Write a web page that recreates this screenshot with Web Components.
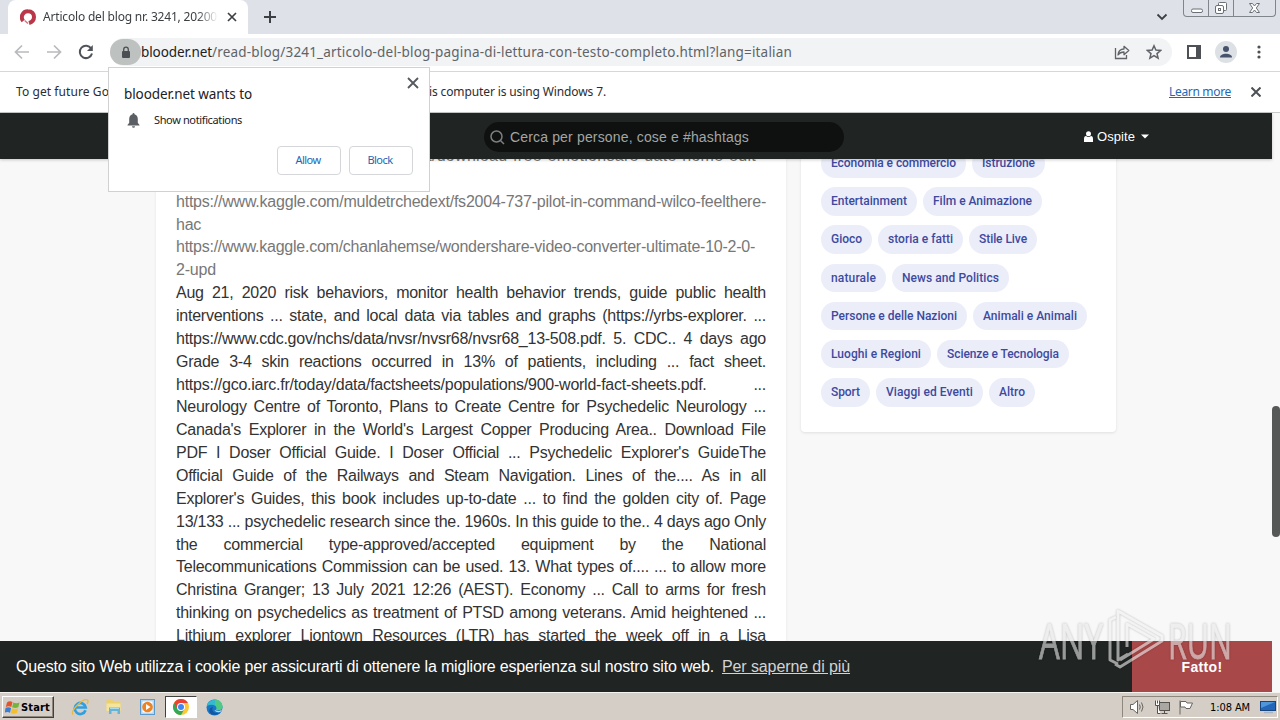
<!DOCTYPE html>
<html lang="it">
<head>
<meta charset="utf-8">
<title>blooder.net</title>
<style>
    html, body { margin: 0; height: 100%; overflow: hidden; }
    body { font-family: "Liberation Sans", Arial, sans-serif; background: #fff; }
</style>
</head>
<body>
<desktop-screen></desktop-screen>
<script>
// Single line of text spaced out to a fixed width
class FitText extends HTMLElement {
    constructor() {
        super();
        this.attachShadow({ mode: 'open' });
        this.shadowRoot.innerHTML = '<style>:host { display: block; flex: none; } span { display: inline-block; white-space: pre; text-decoration: inherit; }</style><span><slot></slot></span>';
    }

    connectedCallback() {
        const width = Number(this.getAttribute('w'));
        const span = this.shadowRoot.querySelector('span');
        const natural = span.getBoundingClientRect().width;
        if (width && natural) {
            span.style.letterSpacing = `${(width - natural) / this.textContent.length}px`;
        }
        this.style.width = `${width}px`;
    }
}

class BrowserTabs extends HTMLElement {
    constructor() {
        super();
        this.attachShadow({ mode: 'open' });
    }

    connectedCallback() {
        this.shadowRoot.innerHTML = `
            <style>
                :host {
                    display: flex;
                    height: 34px;
                    background: #dee1e8;
                    font: 12px "Noto Sans", sans-serif;
                    color: #3c4043;
                }
                .tab {
                    display: flex;
                    align-items: center;
                    box-sizing: border-box;
                    width: 240px;
                    margin-left: 8px;
                    padding: 0 10px 0 12px;
                    background: #fff;
                    border-radius: 8px 8px 0 0;
                }
                .title {
                    width: 175px;
                    margin: -2px 9px 0 7px;
                    -webkit-mask-image: linear-gradient(to right, #000 88%, transparent);
                }
                .plus { margin: 10px 0 0 15px; }
                .chevron { margin: 12px 15px 0 auto; }
                .controls {
                    display: flex;
                    box-sizing: border-box;
                    width: 93px;
                    height: 17px;
                    margin-right: 4px;
                    border: 1px solid #80858c;
                    border-top: 0;
                    border-radius: 0 0 4px 4px;
                }
                .controls svg { display: block; }
            </style>
            <div class="tab">
                <svg width="16" height="16" viewBox="0 0 16 16" fill="none">
                    <path d="M3.200 12A6 6 0 0 1 8 2.200C12 2.200 14 5 14 8Q14 12.500 9 14" stroke="#b93749" stroke-width="4"/>
                    <path d="M4.600 11.500l3.400 3" stroke="#d86a78" stroke-width="1.300"/>
                </svg>
                <div class="title"><fit-text w="174">Articolo del blog nr. 3241, 20200</fit-text></div>
                <svg width="10" height="10" viewBox="0 0 10 10" stroke="#3c4043" stroke-width="1.7"><path d="M1 1l8 8M9 1l-8 8"/></svg>
            </div>
            <svg class="plus" width="14" height="14" viewBox="0 0 14 14" stroke="#3c4043" stroke-width="2"><path d="M7 1v12M1 7h12"/></svg>
            <svg class="chevron" width="12" height="10" viewBox="0 0 12 10" fill="none" stroke="#3c4043" stroke-width="1.8"><path d="M1.5 2.5L6 7l4.500-4.500"/></svg>
            <div class="controls">
                <svg width="91" height="16" viewBox="0 0 91 16" fill="none" stroke="#6b7077">
                    <path d="M24.500 0v16M49.500 0v16" stroke="#80858c"/>
                    <rect x="7.500" y="9" width="11" height="3.500" rx="1.500" fill="#fff"/>
                    <path d="M34.500 5V3.500q0-1 1-1h6q1 0 1 1v6q0 1-1 1H40" fill="#fff"/>
                    <rect x="31.500" y="5.500" width="8" height="8" rx="1.500" fill="#fff"/>
                    <rect x="34.500" y="8.500" width="2" height="2"/>
                    <path d="M65.500 3.500h3l2 2.500 2-2.500h3L72.300 8l3.200 4.500h-3l-2-2.500-2 2.500h-3L68.700 8z" fill="#fff"/>
                </svg>
            </div>
        `;
    }
}

class BrowserToolbar extends HTMLElement {
    constructor() {
        super();
        this.attachShadow({ mode: 'open' });
    }

    connectedCallback() {
        this.shadowRoot.innerHTML = `
            <style>
                :host {
                    display: flex;
                    align-items: center;
                    box-sizing: border-box;
                    height: 38px;
                    padding: 0 13px 1px 14px;
                    background: #fff;
                    border-bottom: 1px solid #d5d7da;
                    font: 13.5px "Noto Sans", sans-serif;
                    color: #5f6368;
                }
                svg { display: block; flex: none; }
                .nav { display: flex; gap: 16px; }
                .address {
                    display: flex;
                    align-items: center;
                    box-sizing: border-box;
                    width: 1062px;
                    height: 28px;
                    margin-left: 16px;
                    padding-right: 10px;
                    background: #f1f3f4;
                    border-radius: 14px;
                }
                .lock {
                    display: grid;
                    place-items: center;
                    width: 31px;
                    height: 26px;
                    border-radius: 13px;
                    background: #bdc1c0;
                }
                .host { color: #202124; }
                .share { margin: 0 16px 0 auto; }
                .panel { margin-left: 15px; }
                .avatar { margin-left: 14px; }
                .menu { margin-left: auto; }
            </style>
            <div class="nav">
                <svg width="16" height="16" viewBox="0 0 16 16" fill="none" stroke="#b8babd" stroke-width="1.7"><path d="M15 8H2M8 1.500L1.500 8 8 14.500"/></svg>
                <svg width="16" height="16" viewBox="0 0 16 16" fill="none" stroke="#b8babd" stroke-width="1.7"><path d="M1 8h13M8 1.500L14.500 8 8 14.500"/></svg>
                <svg width="16" height="16" viewBox="0 0 16 16" fill="none" stroke="#505459" stroke-width="2"><path d="M13.200 4.500A6.200 6.200 0 1 0 14 9.500"/><path d="M14.800 1v6H9z" fill="#505459" stroke="none"/></svg>
            </div>
            <div class="address">
                <div class="lock">
                    <svg width="10" height="13" viewBox="0 0 10 13"><rect x="1" y="5" width="8" height="7" rx="1" fill="#4b4f53"/><path d="M2.700 5V3.500a2.300 2.300 0 0 1 4.600 0V5" fill="none" stroke="#4b4f53" stroke-width="1.300"/></svg>
                </div>
                <fit-text class="host" w="71">blooder.net</fit-text>
                <fit-text w="580">/read-blog/3241_articolo-del-blog-pagina-di-lettura-con-testo-completo.html?lang=italian</fit-text>
                <svg class="share" width="16" height="16" viewBox="0 0 16 16" fill="none" stroke="#5f6368" stroke-width="1.300"><path d="M1.500 4v10.500h11V11"/><path d="M4 11c.4-4 2.300-6 6-6V2.300L14.800 6.600 10 10.700V8C7.500 8 5.500 8.800 4 11z" stroke-linejoin="round"/></svg>
                <svg width="16" height="16" viewBox="0 0 16 16" fill="none" stroke="#5f6368" stroke-width="1.500"><path d="M8 1.800l1.900 4.300 4.700.4-3.600 3.100 1.100 4.600L8 11.700l-4.100 2.500L5 9.600 1.400 6.500l4.700-.4z"/></svg>
            </div>
            <svg class="panel" width="14" height="14" viewBox="0 0 14 14"><rect x="1" y="1" width="12" height="12" fill="#fff" stroke="#4d5156" stroke-width="2"/><path d="M9 1h4v12H9z" fill="#4d5156"/></svg>
            <svg class="avatar" width="22" height="22" viewBox="0 0 22 22"><circle cx="11" cy="11" r="11" fill="#dde1e6"/><circle cx="11" cy="8" r="3" fill="#46516c"/><path d="M5 16.500c0-5 12-5 12 0z" fill="#46516c"/></svg>
            <svg class="menu" width="16" height="16" viewBox="0 0 16 16" fill="#4d5156"><circle cx="8" cy="3" r="1.600"/><circle cx="8" cy="8" r="1.600"/><circle cx="8" cy="13" r="1.600"/></svg>
        `;
    }
}

class InfoBar extends HTMLElement {
    constructor() {
        super();
        this.attachShadow({ mode: 'open' });
    }

    connectedCallback() {
        this.shadowRoot.innerHTML = `
            <style>
                :host {
                    display: flex;
                    align-items: center;
                    box-sizing: border-box;
                    height: 41px;
                    padding: 0 19px 1px 16px;
                    background: #fff;
                    border-bottom: 1px solid #c8cac9;
                    font: 12px "Noto Sans", sans-serif;
                    color: #2b2d30;
                }
                .message { display: flex; }
                .learn { margin: 0 20px 0 auto; color: #1c6ab5; text-decoration: underline; }
            </style>
            <div class="message">
                <fit-text w="93">To get future Go</fit-text>
                <fit-text w="320">ogle Chrome updates, you'll need Windows 10 or later. Th</fit-text>
                <fit-text w="177">is computer is using Windows 7.</fit-text>
            </div>
            <fit-text class="learn" w="62">Learn more</fit-text>
            <svg width="10" height="10" viewBox="0 0 10 10" stroke="#4d5156" stroke-width="2"><path d="M.5.5l9 9M9.500.5l-9 9"/></svg>
        `;
    }
}

class PermissionBubble extends HTMLElement {
    constructor() {
        super();
        this.attachShadow({ mode: 'open' });
    }

    connectedCallback() {
        this.shadowRoot.innerHTML = `
            <style>
                :host {
                    display: flex;
                    flex-direction: column;
                    box-sizing: border-box;
                    width: 322px;
                    height: 125px;
                    padding: 9px 16px 16px 15px;
                    background: #fff;
                    border: 1px solid #cfd1d2;
                    font: 11px "Noto Sans", sans-serif;
                    color: #202124;
                }
                .head { display: flex; justify-content: space-between; height: 31px; }
                .head fit-text { margin-top: 7px; font-size: 13.5px; line-height: 20px; }
                .head svg { margin-right: -6px; }
                .row { display: flex; align-items: center; height: 24px; padding-left: 3px; gap: 14px; }
                .row fit-text { margin-top: -2px; }
                .buttons { display: flex; justify-content: flex-end; gap: 8px; margin-top: auto; }
                button {
                    display: grid;
                    place-items: center;
                    width: 64px;
                    height: 29px;
                    padding: 0 2px 2px 0;
                    background: #fff;
                    border: 1px solid #d4d6d9;
                    border-radius: 4px;
                    font: inherit;
                    color: #1b66b8;
                }
            </style>
            <div class="head">
                <fit-text w="128">blooder.net wants to</fit-text>
                <svg width="12" height="12" viewBox="0 0 12 12" stroke="#55595e" stroke-width="1.800"><path d="M1 1l10 10M11 1L1 11"/></svg>
            </div>
            <div class="row">
                <svg width="13" height="15" viewBox="0 0 13 15" fill="#5b5f64"><path d="M6.500 0q1 0 1 1.300C9.800 2 10.800 3.800 10.800 6v3.800L12.500 12v.6H.5V12l1.700-2.200V6c0-2.200 1-4 3.300-4.700Q5.500 0 6.500 0zM5 13.300h3a1.500 1.500 0 0 1-3 0z"/></svg>
                <fit-text w="88">Show notifications</fit-text>
            </div>
            <div class="buttons">
                <button><fit-text w="25">Allow</fit-text></button>
                <button><fit-text w="25">Block</fit-text></button>
            </div>
        `;
    }
}

class SiteHeader extends HTMLElement {
    constructor() {
        super();
        this.attachShadow({ mode: 'open' });
    }

    connectedCallback() {
        this.shadowRoot.innerHTML = `
            <style>
                :host {
                    display: grid;
                    grid-template-columns: 484px 360px auto;
                    align-items: center;
                    height: 46px;
                    background: #202423;
                    box-shadow: 0 1px 3px rgba(0, 0, 0, .2);
                    color: #fff;
                }
                .search {
                    grid-column: 2;
                    display: flex;
                    align-items: center;
                    box-sizing: border-box;
                    height: 30px;
                    margin-top: 2px;
                    padding-left: 6px;
                    gap: 5px;
                    background: #0e1110;
                    border-radius: 15px;
                    color: #a3a5a4;
                    font-size: 14px;
                }
                .user {
                    display: flex;
                    align-items: center;
                    margin-left: 240px;
                    font-size: 13px;
                }
                .user fit-text { margin: 0 6px 0 4px; }
            </style>
            <div class="search">
                <svg width="15" height="15" viewBox="0 0 15 15" fill="none" stroke="#7c7f7e" stroke-width="1.500"><circle cx="6.500" cy="6.500" r="5.500"/><path d="M10.500 10.500L14 14"/></svg>
                <fit-text w="239">Cerca per persone, cose e #hashtags</fit-text>
            </div>
            <div class="user">
                <svg width="9" height="11" viewBox="0 0 9 11" fill="#fff"><circle cx="4.500" cy="2.800" r="2.500"/><path d="M0 11V8q0-3 2-3 2.500 1.800 5 0 2 0 2 3v3z"/></svg>
                <fit-text w="38">Ospite</fit-text>
                <svg width="8" height="5" viewBox="0 0 8 5" fill="#fff"><path d="M0 .5h8L4 4.500z"/></svg>
            </div>
        `;
    }
}

class BlogArticle extends HTMLElement {
    constructor() {
        super();
        this.attachShadow({ mode: 'open' });
        this.links = [
            ['https://www.kaggle.com/sandrinest/download-free-emotionsare-date-nome-edit', 580],
            ['hac', 25],
            ['https://www.kaggle.com/muldetrchedext/fs2004-737-pilot-in-command-wilco-feelthere-', 590],
            ['hac', 25],
            ['https://www.kaggle.com/chanlahemse/wondershare-video-converter-ultimate-10-2-0-', 579],
            ['2-upd', 40]
        ];
        this.lines = [
            'Aug 21, 2020 risk behaviors, monitor health behavior trends, guide public health',
            'interventions ... state, and local data via tables and graphs (https://yrbs-explorer. ...',
            'https://www.cdc.gov/nchs/data/nvsr/nvsr68/nvsr68_13-508.pdf. 5. CDC.. 4 days ago',
            'Grade 3-4 skin reactions occurred in 13% of patients, including ... fact sheet.',
            'https://gco.iarc.fr/today/data/factsheets/populations/900-world-fact-sheets.pdf. ...',
            'Neurology Centre of Toronto, Plans to Create Centre for Psychedelic Neurology ...',
            "Canada's Explorer in the World's Largest Copper Producing Area.. Download File",
            "PDF I Doser Official Guide. I Doser Official ... Psychedelic Explorer's GuideThe",
            'Official Guide of the Railways and Steam Navigation. Lines of the.... As in all',
            "Explorer's Guides, this book includes up-to-date ... to find the golden city of. Page",
            '13/133 ... psychedelic research since the. 1960s. In this guide to the.. 4 days ago Only',
            'the commercial type-approved/accepted equipment by the National',
            'Telecommunications Commission can be used. 13. What types of.... ... to allow more',
            'Christina Granger; 13 July 2021 12:26 (AEST). Economy ... Call to arms for fresh',
            'thinking on psychedelics as treatment of PTSD among veterans. Amid heightened ...',
            'Lithium explorer Liontown Resources (LTR) has started the week off in a Lisa'
        ];
    }

    connectedCallback() {
        this.shadowRoot.innerHTML = `
            <style>
                :host {
                    display: block;
                    flex: none;
                    box-sizing: border-box;
                    width: 630px;
                    height: 520px;
                    padding: 0 20px;
                    background: #fff;
                    box-shadow: 0 0 3px rgba(0, 0, 0, .08);
                    font-size: 16px;
                    line-height: 22.86px;
                    color: #333;
                }
                .text { display: flex; flex-direction: column; margin-top: -14px; }
                .link { height: 22.86px; color: #777; }
                p {
                    flex: none;
                    margin: 0;
                    white-space: nowrap;
                    letter-spacing: -.25px;
                    text-align: justify;
                    text-align-last: justify;
                }
            </style>
            <div class="text">
                ${this.links.map(([text, w]) => `<fit-text class="link" w="${w}">${text}</fit-text>`).join('')}
                ${this.lines.map(text => `<p>${text}</p>`).join('')}
            </div>
        `;
    }
}

class CategoryCard extends HTMLElement {
    constructor() {
        super();
        this.attachShadow({ mode: 'open' });
        this.rows = [
            [['Economia e commercio', 125], ['Istruzione', 53]],
            [['Entertainment', 76], ['Film e Animazione', 99]],
            [['Gioco', 31], ['storia e fatti', 65], ['Stile Live', 48]],
            [['naturale', 45], ['News and Politics', 97]],
            [['Persone e delle Nazioni', 126], ['Animali e Animali', 94]],
            [['Luoghi e Regioni', 90], ['Scienze e Tecnologia', 112]],
            [['Sport', 29], ['Viaggi ed Eventi', 87], ['Altro', 26]]
        ];
    }

    connectedCallback() {
        this.shadowRoot.innerHTML = `
            <style>
                :host {
                    display: flex;
                    flex-direction: column;
                    gap: 9.7px;
                    box-sizing: border-box;
                    width: 315px;
                    height: 283px;
                    margin-top: -10px;
                    padding: 0 20px;
                    background: #fff;
                    border-radius: 0 0 4px 4px;
                    box-shadow: 0 1px 3px rgba(0, 0, 0, .1);
                    font: 500 12px/16px Roboto, sans-serif;
                    color: #3d4a9f;
                }
                .row { display: flex; gap: 6px; }
                .tag {
                    box-sizing: border-box;
                    height: 28.5px;
                    padding: 6px 10px;
                    border-radius: 15px;
                    background: #ebedf9;
                }
            </style>
            ${this.rows.map(row => `
                <div class="row">
                    ${row.map(([name, w]) => `<div class="tag"><fit-text w="${w}">${name}</fit-text></div>`).join('')}
                </div>
            `).join('')}
        `;
    }
}

class CookieBar extends HTMLElement {
    constructor() {
        super();
        this.attachShadow({ mode: 'open' });
    }

    connectedCallback() {
        this.shadowRoot.innerHTML = `
            <style>
                :host {
                    display: flex;
                    align-items: center;
                    height: 51px;
                    padding-left: 16px;
                    background: #202423;
                    color: #fff;
                    font-size: 16px;
                }
                .more { margin-left: 8px; color: #d2d3d3; text-decoration: underline; }
                .done {
                    display: grid;
                    place-items: center;
                    width: 140px;
                    height: 51px;
                    margin-left: auto;
                    background: #a94848;
                    font-size: 14px;
                    font-weight: 700;
                }
            </style>
            <fit-text w="698">Questo sito Web utilizza i cookie per assicurarti di ottenere la migliore esperienza sul nostro sito web.</fit-text>
            <fit-text class="more" w="128">Per saperne di più</fit-text>
            <div class="done"><fit-text w="41">Fatto!</fit-text></div>
        `;
    }
}

class SandboxMark extends HTMLElement {
    constructor() {
        super();
        this.attachShadow({ mode: 'open' });
    }

    connectedCallback() {
        this.shadowRoot.innerHTML = `
            <style>
                :host { display: block; opacity: .6; filter: drop-shadow(0 0 1px rgba(0, 0, 0, .4)); }
                svg { display: block; }
                text { font: 50px "Open Sans", sans-serif; fill: #e8e8e8; stroke: #e8e8e8; stroke-width: .8px; }
            </style>
            <svg width="200" height="66" viewBox="0 0 200 66">
                <text x="3" y="52" textLength="64" lengthAdjust="spacingAndGlyphs">ANY</text>
                <text x="132" y="52" textLength="64" lengthAdjust="spacingAndGlyphs">RUN</text>
                <g fill="none" stroke="#f0f0f0" stroke-width="3" stroke-linejoin="round">
                    <path d="M80 10L74 13v40l8 4"/>
                    <path d="M92 47L82 53V4l44 25v5L84 60l-5-3"/>
                    <path d="M91 40V17l27 15-34 21"/>
                </g>
            </svg>
        `;
    }
}

class TaskBar extends HTMLElement {
    constructor() {
        super();
        this.attachShadow({ mode: 'open' });
    }

    connectedCallback() {
        this.shadowRoot.innerHTML = `
            <style>
                :host {
                    display: flex;
                    align-items: center;
                    box-sizing: border-box;
                    height: 28px;
                    padding: 1px 2px 0 2px;
                    background: #d5cec7;
                    border-top: 1px solid #f5f3f0;
                    font: 11px "DejaVu Sans Condensed", "DejaVu Sans", sans-serif;
                    color: #000;
                }
                svg { display: block; flex: none; }
                .start {
                    display: flex;
                    align-items: center;
                    box-sizing: border-box;
                    width: 52px;
                    height: 22px;
                    padding-left: 2px;
                    gap: 1px;
                    border: 1px solid;
                    border-color: #fff #404040 #404040 #fff;
                    box-shadow: inset -1px -1px #8d8780;
                    font-weight: 700;
                }
                .apps { display: flex; align-items: center; margin-left: 17px; }
                .apps > svg { margin-right: 16px; }
                .active {
                    display: grid;
                    place-items: center;
                    box-sizing: border-box;
                    width: 32px;
                    height: 22px;
                    margin: 0 9px 0 -8px;
                    background: #fff;
                    border: 1px solid;
                    border-color: #404040 #fff #fff #404040;
                }
                .tray {
                    display: flex;
                    align-items: center;
                    box-sizing: border-box;
                    width: 156px;
                    height: 22px;
                    margin-left: auto;
                    padding-left: 6px;
                    border: 1px solid;
                    border-color: #8d8780 #fff #fff #8d8780;
                }
                .tray svg { margin-right: 8px; }
                .tray svg:last-child { margin: 0; }
                .tray fit-text { margin: 0 10px 0 8px; }
            </style>
            <div class="start">
                <svg width="15" height="15" viewBox="0 0 15 15"><path d="M2 2.500Q4.500.5 7.500 2L6.300 7Q4 5.700.8 7z" fill="#e2552a"/><path d="M8.300 2.400Q11 4 14.500 2.500L13.300 7.300Q10 8.500 7.100 7.200z" fill="#74b43c"/><path d="M.6 7.800Q3.500 6.500 6.100 7.900L5 12.700Q2.500 11.500-.3 12.600z" fill="#3b7ed0"/><path d="M6.900 8.200Q10 9.500 13 8.300l-1.200 4.800Q8.800 14.500 5.700 13z" fill="#f4bf2c"/></svg>
                <fit-text w="29">Start</fit-text>
            </div>
            <div class="apps">
                <svg width="18" height="18" viewBox="0 0 18 18" fill="none"><path d="M14.500 12.300A5.500 5.500 0 1 1 14.700 9.500H4.500" stroke="#2f9fdf" stroke-width="2.700"/><path d="M2 16.500C-1 13 12-.5 16.500 2c1 .8.500 2.300-.5 4" stroke="#e8b93c" stroke-width="1.300"/></svg>
                <svg width="18" height="18" viewBox="0 0 18 18"><path d="M1.500 2h6l1 2h7v9h-14z" fill="#ecd06c"/><path d="M1.500 5.500h14V13h-14z" fill="#f5e49c"/><path d="M4 16V9.500h11V16h-2.500v-3h-6v3z" fill="#65b4d7"/><path d="M5 10.300h9" stroke="#bfe4f3"/></svg>
                <svg width="18" height="18" viewBox="0 0 18 18"><rect x="1.500" y="1.500" width="14" height="15" fill="#b8d6ee" stroke="#5e9aca"/><rect x="3.500" y="3.500" width="10" height="11" fill="#fff"/><circle cx="8.500" cy="9" r="5.300" fill="#ee8323"/><path d="M7 6v6l4.500-3z" fill="#fff"/></svg>
                <div class="active">
                    <svg width="16" height="16" viewBox="0 0 16 16"><circle cx="8" cy="8" r="8" fill="#fcc934"/><path d="M1.070 4A8 8 0 0 0 8 16l3.500-6L8 8z" fill="#34a853"/><path d="M1.070 4L4.500 10 8 4H14.930A8 8 0 0 0 1.070 4z" fill="#ea4335"/><circle cx="8" cy="8" r="4" fill="#fff"/><circle cx="8" cy="8" r="3" fill="#4285f4"/></svg>
                </div>
                <svg width="17" height="17" viewBox="0 0 17 17"><circle cx="8.500" cy="8.500" r="8" fill="#1878c8"/><path d="M.8 7C2-1 15-2 16.500 7.500c.3 3.500-3.500 4.500-6.500 3.500 2.500-4-3.500-7-9.200-4z" fill="#35b9cf"/><path d="M9 .5c5 0 7.800 4 7.500 7.500-.5 3-4 3.700-6.500 3 1.500-2 .5-4-1-5z" fill="#52c982"/><path d="M7 8c-2 3 .5 7 6.500 5.700C9 18 2 15 3.500 10.500 4 9 5.500 8 7 8z" fill="#1454a0"/><path d="M9.500 11.300c2 1.200 5 .8 6.700-.8l-1 2c-2.500 1.200-5.500.8-6.700-1.200z" fill="#d5cec7"/></svg>
            </div>
            <div class="tray">
                <svg width="17" height="16" viewBox="0 0 17 16" fill="#fff" stroke="#68645f"><path d="M1.500 5.500H4l4.500-4v13l-4.500-4H1.500z"/><path d="M10.500 5.500q1.500 2.500 0 5M12.500 3.500q3 4.500 0 9" fill="none"/></svg>
                <svg width="16" height="16" viewBox="0 0 16 16" fill="#fff" stroke="#56524e"><rect x="5.500" y="3.500" width="10" height="8" fill="#aaa7a2"/><path d="M7.500 14.500h6M10.500 12v2M3.500 7v7.500h3M1.500 1.500v5h4v-5M3.500 1.500v3"/></svg>
                <svg width="16" height="16" viewBox="0 0 16 16" fill="#fff" stroke="#68645f"><path d="M2 1.500v14M2.500 2.500H8l1 1.500h5.500L12 9.500H8l-1-1.500H2.500z"/></svg>
                <fit-text w="40">1:08 AM</fit-text>
                <svg width="16" height="14" viewBox="0 0 16 14"><rect x=".5" y="1.500" width="15" height="9" fill="#2467b8" stroke="#16457f"/><path d="M1 2h14L1 8z" fill="#4f96da"/><path d="M4 12.500h9" stroke="#a9b4c2" stroke-width="1.500"/></svg>
            </div>
        `;
    }
}

class DesktopScreen extends HTMLElement {
    constructor() {
        super();
        this.attachShadow({ mode: 'open' });
    }

    connectedCallback() {
        this.shadowRoot.innerHTML = `
            <style>
                :host {
                    display: flex;
                    flex-direction: column;
                    position: relative;
                    width: 1280px;
                    height: 720px;
                    overflow: hidden;
                }
                .viewport { display: flex; height: 579px; }
                .page { display: flex; flex-direction: column; width: 1272px; background: #f8f8f8; }
                site-header { position: relative; z-index: 1; }
                .content {
                    display: flex;
                    align-items: flex-start;
                    flex: 1;
                    gap: 15px;
                    min-height: 0;
                    padding-left: 156px;
                    overflow: hidden;
                }
                .scrollbar { width: 8px; background: #f8f8f8; }
                .thumb { height: 131px; margin-top: 293px; border-radius: 4px; background: #555857; }
                permission-bubble { position: absolute; left: 108px; top: 67px; z-index: 2; }
                sandbox-mark { position: absolute; left: 1036px; top: 607px; }
            </style>
            <browser-tabs></browser-tabs>
            <browser-toolbar></browser-toolbar>
            <info-bar></info-bar>
            <div class="viewport">
                <div class="page">
                    <site-header></site-header>
                    <div class="content">
                        <blog-article></blog-article>
                        <category-card></category-card>
                    </div>
                    <cookie-bar></cookie-bar>
                </div>
                <div class="scrollbar"><div class="thumb"></div></div>
            </div>
            <task-bar></task-bar>
            <permission-bubble></permission-bubble>
            <sandbox-mark></sandbox-mark>
        `;
    }
}

customElements.define('fit-text', FitText);
customElements.define('browser-tabs', BrowserTabs);
customElements.define('browser-toolbar', BrowserToolbar);
customElements.define('info-bar', InfoBar);
customElements.define('permission-bubble', PermissionBubble);
customElements.define('site-header', SiteHeader);
customElements.define('blog-article', BlogArticle);
customElements.define('category-card', CategoryCard);
customElements.define('cookie-bar', CookieBar);
customElements.define('sandbox-mark', SandboxMark);
customElements.define('task-bar', TaskBar);
customElements.define('desktop-screen', DesktopScreen);
</script>
</body>
</html>
